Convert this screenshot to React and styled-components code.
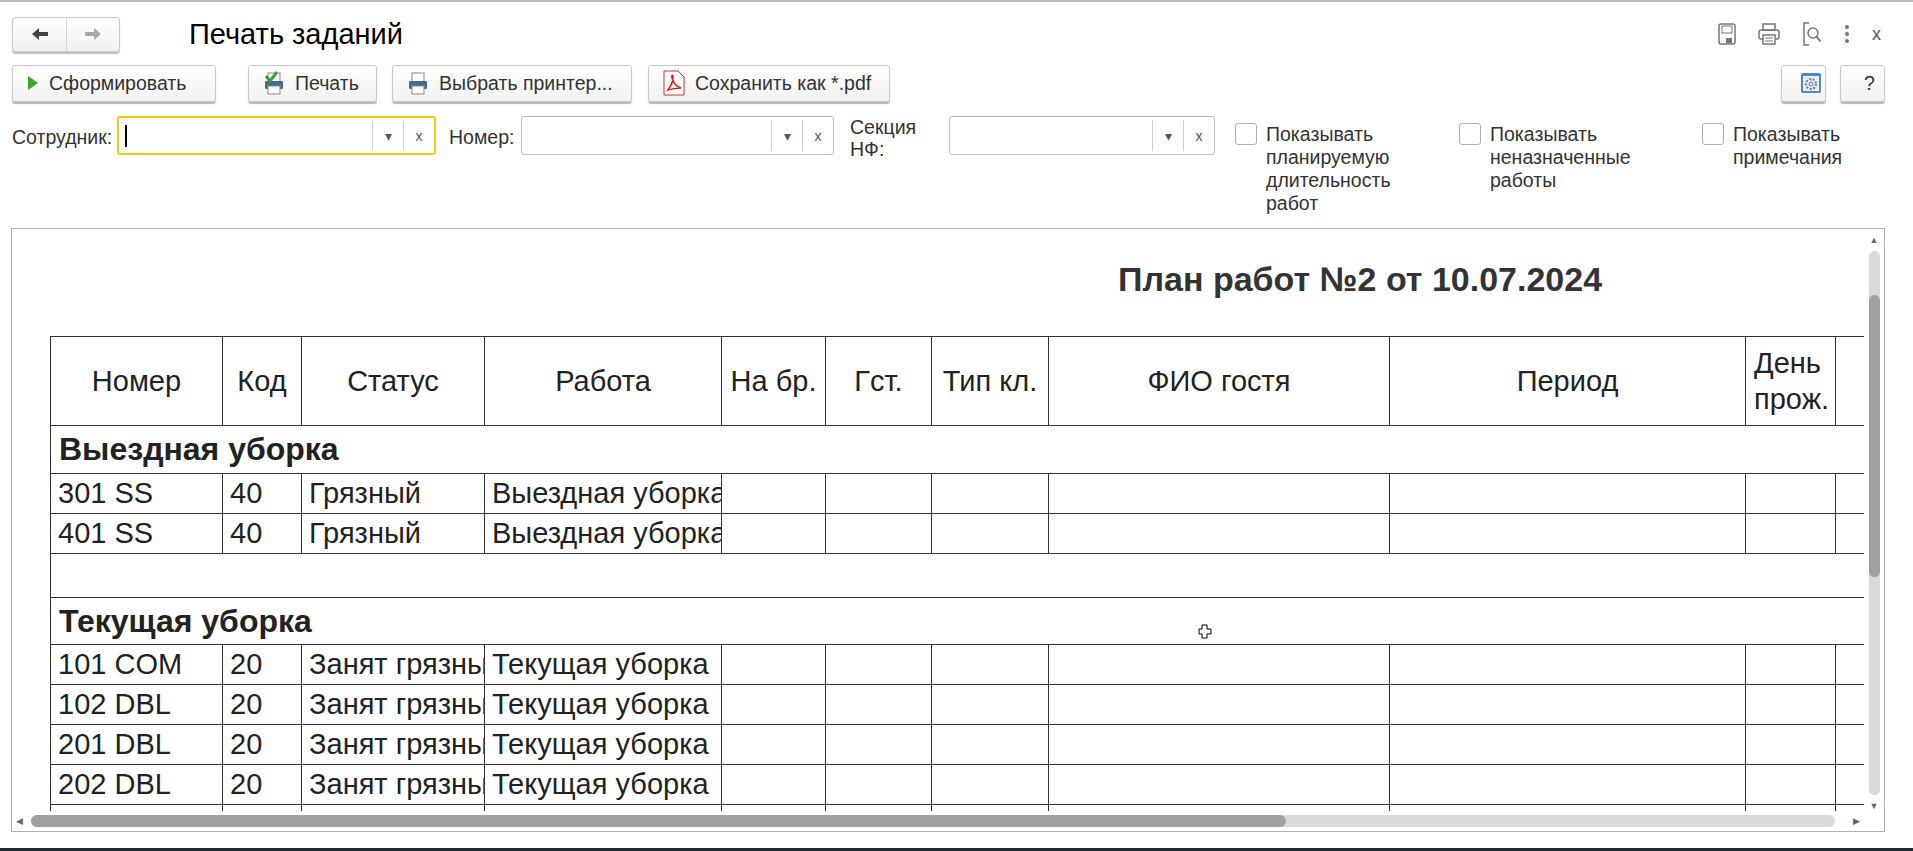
import React from "react";
import styled, { createGlobalStyle } from "styled-components";

const G = createGlobalStyle`
  html,body{margin:0;padding:0;background:#fff;}
  body{font-family:"Liberation Sans",Arial,sans-serif;color:#333;overflow:hidden;}
  *{box-sizing:border-box;}
`;

const Page = styled.div`
  width:1913px;height:851px;display:flex;flex-direction:column;position:relative;
  border-top:2px solid #bdbdbd;
`;
const Header = styled.div`
  display:flex;align-items:center;height:38px;margin-top:13px;padding-left:12px;
`;
const Nav = styled.div`
  display:flex;height:35px;border:1px solid #c8c8c8;border-radius:4px;
  box-shadow:0 2px 1px #bdbdbd;background:linear-gradient(#fff,#f1f1f1);
`;
const NavBtn = styled.div`
  width:53px;display:flex;align-items:center;justify-content:center;
  border-left:${p=>p.$sep?"1px solid #d4d4d4":"none"};
`;
const Title = styled.div`
  font-size:29px;color:#000;margin-left:69px;flex:1;
`;
const TopIcons = styled.div`
  display:flex;align-items:center;gap:22px;padding-right:32px;
`;
const Toolbar = styled.div`
  display:flex;align-items:center;padding:0 28px 0 12px;margin-top:11px;height:38px;
`;
const Btn = styled.div`
  height:37px;width:${p=>p.$w}px;margin-left:${p=>p.$ml||0}px;
  display:flex;align-items:center;gap:10px;padding-left:${p=>p.$pl||14}px;
  justify-content:${p=>p.$center?"center":"flex-start"};
  border:1px solid #c8c8c8;border-radius:3px;background:linear-gradient(#fff,#f2f2f2);
  box-shadow:0 2px 1px #b5b5b5;font-size:19.5px;color:#333;white-space:nowrap;
`;
const Spacer = styled.div`flex:1;`;
const Filters = styled.div`
  display:flex;align-items:flex-start;padding-left:12px;margin-top:14px;height:112px;
`;
const Label = styled.div`
  font-size:19.5px;line-height:22px;margin-top:${p=>p.$mt??10}px;margin-left:${p=>p.$ml||0}px;width:${p=>p.$w}px;flex:none;
`;
const Input = styled.div`
  width:${p=>p.$w}px;height:39px;display:flex;border-radius:3px;background:#fff;flex:none;
  border:${p=>p.$focus?"2px solid #f5c518":"1px solid #bdbdbd"};
`;
const Field = styled.div`flex:1;display:flex;align-items:center;padding-left:6px;`;
const Caret = styled.div`width:2px;height:22px;background:#000;`;
const InBtn = styled.div`
  width:31px;display:flex;align-items:center;justify-content:center;
  border-left:1px solid #cfcfcf;margin:3px 0;font-size:14px;color:#555;
`;
const Check = styled.div`
  display:flex;gap:9px;width:${p=>p.$w}px;margin-left:${p=>p.$ml||0}px;margin-top:7px;flex:none;
`;
const Box = styled.div`
  width:22px;height:22px;border:1px solid #b0b0b0;border-radius:3px;background:#fff;flex:none;
`;
const CheckText = styled.div`font-size:19.5px;line-height:23px;`;

const Report = styled.div`
  margin:0 28px 0 11px;height:604px;border:1px solid #b0b0b0;
  display:grid;grid-template-columns:1fr 20px;grid-template-rows:1fr 20px;
`;
const Content = styled.div`overflow:hidden;padding-left:38px;`;
const RTitle = styled.div`
  font-size:34px;font-weight:bold;color:#333;margin:31px 0 0 1068px;height:76px;
`;
const Table = styled.table`
  border-collapse:collapse;table-layout:fixed;width:1814px;font-size:29px;color:#222;
`;
const Th = styled.th`
  font-weight:normal;height:89px;border:1px solid #333;
  text-align:${p=>p.$left?"left":"center"};padding:0 0 0 ${p=>p.$left?8:0}px;line-height:36px;
`;
const Td = styled.td`
  height:40px;border:1px solid #333;padding:0 0 0 7px;white-space:nowrap;overflow:hidden;
`;
const GroupTd = styled.td`
  height:${p=>p.$h}px;border:1px solid #333;border-right:none;font-weight:${p=>p.$bold?"bold":"normal"};
  font-size:32px;padding:0 0 0 8px;white-space:nowrap;
`;
const VScroll = styled.div`
  display:flex;flex-direction:column;align-items:center;padding-top:6px;
`;
const Arrow = styled.div`font-size:9px;color:#666;line-height:10px;`;
const VTrack = styled.div`
  width:11px;flex:1;margin:6px 0;background:#d9d9d9;border-radius:6px;padding-top:44px;
`;
const VThumb = styled.div`width:11px;height:282px;background:#a0a0a0;border-radius:6px;`;
const HScroll = styled.div`
  display:flex;align-items:center;padding:0 4px;gap:8px;
`;
const HTrack = styled.div`
  flex:1;height:12px;background:#d9d9d9;border-radius:6px;margin-right:10px;
`;
const HThumb = styled.div`width:1255px;height:12px;background:#a0a0a0;border-radius:6px;`;
const Corner = styled.div``;
const Taskbar = styled.div`
  position:absolute;left:0;right:0;bottom:0;height:3px;background:#1f2a33;
`;
const Cursor = styled.div`position:absolute;left:1198px;top:622px;`;

const cols=[172,79,183,237,104,106,117,341,356,90,29];
const heads=["Номер","Код","Статус","Работа","На бр.","Гст.","Тип кл.","ФИО гостя","Период","День прож.",""];

const Row=({r})=>(
  <tr>{cols.map((c,i)=><Td key={i}>{r[i]||""}</Td>)}</tr>
);

const PrintIcon=({check})=>(
  <svg width="22" height="24" viewBox="0 0 22 24">
    <rect x="5" y="2" width="12" height="9" fill="#fff" stroke="#888"/>
    <rect x="2" y="10" width="18" height="8" rx="1" fill="#4a6a8a"/>
    <rect x="5" y="15" width="12" height="8" fill="#fff" stroke="#888"/>
    {check&&<path d="M3 5 L7 10 L14 1" stroke="#3aa33a" strokeWidth="3" fill="none"/>}
  </svg>
);

export default function App(){
  return(
    <Page>
      <G/>
      <Header>
        <Nav>
          <NavBtn><svg width="18" height="14"><path d="M1 7 L8 1 V5 H17 V9 H8 V13Z" fill="#444"/></svg></NavBtn>
          <NavBtn $sep><svg width="18" height="14"><path d="M17 7 L10 1 V5 H1 V9 H10 V13Z" fill="#aaa"/></svg></NavBtn>
        </Nav>
        <Title>Печать заданий</Title>
        <TopIcons>
          <svg width="18" height="22" viewBox="0 0 18 22"><rect x="1" y="1" width="16" height="20" rx="2" fill="none" stroke="#777" strokeWidth="1.5"/><rect x="4" y="3" width="10" height="7" fill="none" stroke="#777"/><rect x="8" y="15" width="6" height="5" fill="#777"/></svg>
          <svg width="22" height="22" viewBox="0 0 22 22"><rect x="5" y="1" width="12" height="6" fill="none" stroke="#777" strokeWidth="1.5"/><rect x="1" y="7" width="20" height="9" rx="2" fill="none" stroke="#777" strokeWidth="1.5"/><rect x="5" y="12" width="12" height="9" fill="#fff" stroke="#777" strokeWidth="1.5"/><path d="M7 15h8M7 18h8" stroke="#777"/></svg>
          <svg width="20" height="24" viewBox="0 0 20 24"><path d="M7 1H2v22h5" fill="none" stroke="#777" strokeWidth="1.5"/><circle cx="11" cy="11" r="5" fill="none" stroke="#777" strokeWidth="1.5"/><path d="M14.5 14.5l4 5" stroke="#777" strokeWidth="2"/></svg>
          <svg width="6" height="20"><circle cx="3" cy="3" r="2" fill="#777"/><circle cx="3" cy="10" r="2" fill="#777"/><circle cx="3" cy="17" r="2" fill="#777"/></svg>
          <span style={{fontSize:18,color:"#555"}}>x</span>
        </TopIcons>
      </Header>
      <Toolbar>
        <Btn $w={204}><svg width="12" height="16"><path d="M1 1 L11 8 L1 15Z" fill="#3aa52a"/></svg>Сформировать</Btn>
        <Btn $w={129} $ml={32}><PrintIcon check/>Печать</Btn>
        <Btn $w={240} $ml={15}><PrintIcon/>Выбрать принтер...</Btn>
        <Btn $w={242} $ml={16}>
          <svg width="22" height="26" viewBox="0 0 22 26"><path d="M1 1h14l6 6v18H1z" fill="#fff" stroke="#b33"/><path d="M5 20c3-4 5-9 5-13 0-3-2-2-1 1 1 5 5 9 9 10-4 0-9 1-13 2z" fill="none" stroke="#c22" strokeWidth="1.5"/></svg>
          Сохранить как *.pdf
        </Btn>
        <Spacer/>
        <Btn $w={45} $pl={0} $center>
          <svg width="20" height="20" viewBox="0 0 20 20"><rect x="0" y="0" width="20" height="20" rx="2" fill="#4f86c6"/><rect x="2" y="3" width="16" height="15" fill="#e8eef5"/><circle cx="10" cy="11" r="5" fill="none" stroke="#6a7f95" strokeWidth="2" strokeDasharray="2 1.5"/><circle cx="10" cy="11" r="2" fill="none" stroke="#6a7f95"/></svg>
        </Btn>
        <Btn $w={45} $ml={14} $pl={0} $center>?</Btn>
      </Toolbar>
      <Filters>
        <Label $w={105}>Сотрудник:</Label>
        <Input $w={319} $focus><Field><Caret/></Field><InBtn>▾</InBtn><InBtn>x</InBtn></Input>
        <Label $ml={13} $w={72}>Номер:</Label>
        <Input $w={313}><Field/><InBtn>▾</InBtn><InBtn>x</InBtn></Input>
        <Label $ml={16} $mt={0} $w={99}>Секция<br/>НФ:</Label>
        <Input $w={266}><Field/><InBtn>▾</InBtn><InBtn>x</InBtn></Input>
        <Check $ml={20} $w={224}><Box/><CheckText>Показывать<br/>планируемую<br/>длительность<br/>работ</CheckText></Check>
        <Check $w={243}><Box/><CheckText>Показывать<br/>неназначенные<br/>работы</CheckText></Check>
        <Check $w={180}><Box/><CheckText>Показывать<br/>примечания</CheckText></Check>
      </Filters>
      <Report>
        <Content>
          <RTitle>План работ №2 от 10.07.2024</RTitle>
          <Table>
            <colgroup>{cols.map((c,i)=><col key={i} style={{width:c}}/>)}</colgroup>
            <thead><tr>{heads.map((h,i)=><Th key={i} $left={i===9}>{i===9?<>День<br/>прож.</>:h}</Th>)}</tr></thead>
            <tbody>
              <tr><GroupTd colSpan={11} $h={48} $bold>Выездная уборка</GroupTd></tr>
              <Row r={["301 SS","40","Грязный","Выездная уборка"]}/>
              <Row r={["401 SS","40","Грязный","Выездная уборка"]}/>
              <tr><GroupTd colSpan={11} $h={44}></GroupTd></tr>
              <tr><GroupTd colSpan={11} $h={47} $bold>Текущая уборка</GroupTd></tr>
              <Row r={["101 COM","20","Занят грязный","Текущая уборка"]}/>
              <Row r={["102 DBL","20","Занят грязный","Текущая уборка"]}/>
              <Row r={["201 DBL","20","Занят грязный","Текущая уборка"]}/>
              <Row r={["202 DBL","20","Занят грязный","Текущая уборка"]}/>
              <Row r={["",""]}/>
            </tbody>
          </Table>
        </Content>
        <VScroll><Arrow>▲</Arrow><VTrack><VThumb/></VTrack><Arrow>▼</Arrow></VScroll>
        <HScroll><Arrow>◀</Arrow><HTrack><HThumb/></HTrack><Arrow>▶</Arrow></HScroll>
        <Corner/>
      </Report>
      <Cursor><svg width="14" height="16"><path d="M4 1h5v4h4v5H9v4H4v-4H1V5h3z" fill="#fff" stroke="#000"/></svg></Cursor>
      <Taskbar/>
    </Page>
  );
}
